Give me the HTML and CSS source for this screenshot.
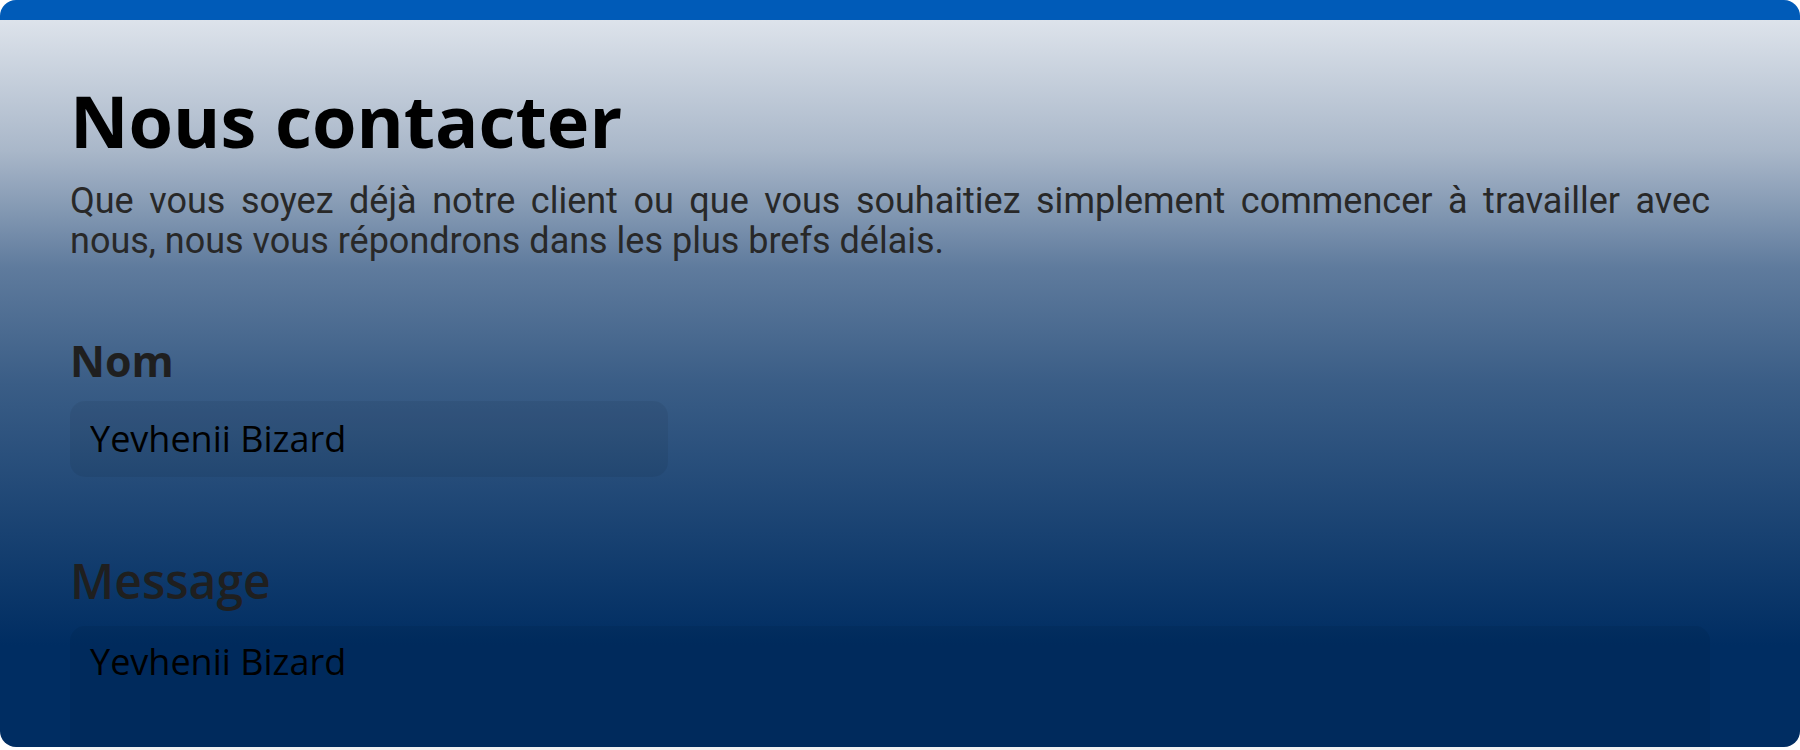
FILE: index.html
```html
<!DOCTYPE html>
<html lang="fr">
<head>
<meta charset="utf-8">
<title>Nous contacter</title>
<link rel="stylesheet" href="styles.css">
</head>
<body>
  <section class="card">
    <div class="inner">
      <h1 class="title">Nous contacter</h1>
      <p class="intro">Que vous soyez déjà notre client ou que vous souhaitiez simplement commencer à travailler avec nous, nous vous répondrons dans les plus brefs délais.</p>
      <form class="form">
        <div class="field field-name">
          <label class="label label-name" for="nom">Nom</label>
          <input class="input" id="nom" type="text" value="Yevhenii Bizard">
        </div>
        <div class="field field-message">
          <label class="label label-message" for="msg">Message</label>
          <textarea class="textarea" id="msg">Yevhenii Bizard</textarea>
        </div>
      </form>
    </div>
  </section>
</body>
</html>
```

FILE: styles.css
```css
html, body {
  margin: 0;
  padding: 0;
  height: 750px;
  overflow: hidden;
  background: #ffffff;
}

.card {
  box-sizing: border-box;
  height: 747px;
  border-top: 20px solid #005bb8;
  border-radius: 16px;
  background: linear-gradient(180deg,
    #dde3eb 0%,
    #a9b7c9 18%,
    #5f7b9d 34%,
    #3a5d86 50%,
    #0e396b 77%,
    #002d62 86%,
    #002d62 100%);
  padding: 57px 0 0 70px;
}

.inner {
  width: 1640px;
}

.title {
  margin: 0;
  font-family: "Open Sans", "Noto Sans", sans-serif;
  font-weight: 700;
  font-size: 72px;
  line-height: 86.4px;
  color: #000;
}

.intro {
  margin: 18.6px 0 0;
  font-family: Roboto, "Liberation Sans", sans-serif;
  font-size: 36px;
  line-height: 39.6px;
  color: #282828;
  text-align: justify;
}

.form {
  display: flex;
  flex-direction: column;
  margin-top: 74px;
}

.field {
  display: flex;
  flex-direction: column;
  align-items: flex-start;
}

.field-name {
  gap: 14px;
}

.field-message {
  margin-top: 75.6px;
  gap: 16px;
}

.label {
  font-family: "Open Sans", "Noto Sans", sans-serif;
  color: #1f1f1f;
}

.label-name {
  font-size: 43px;
  font-weight: 700;
  line-height: 51.6px;
}

.label-message {
  font-size: 48px;
  font-weight: 600;
  line-height: 57.6px;
}

.input,
.textarea {
  box-sizing: border-box;
  font-family: "Open Sans", "Noto Sans", sans-serif;
  font-size: 36px;
  line-height: 49px;
  color: #000;
  background: rgba(0, 0, 0, 0.06);
  border: 2px solid transparent;
  border-radius: 15px;
  padding: 0 18px;
  outline: none;
  margin: 0;
}

.input {
  width: 598px;
  height: 76px;
}

.textarea {
  width: 1640px;
  height: 160px;
  resize: none;
  overflow: hidden;
  padding-top: 9px;
}
```
